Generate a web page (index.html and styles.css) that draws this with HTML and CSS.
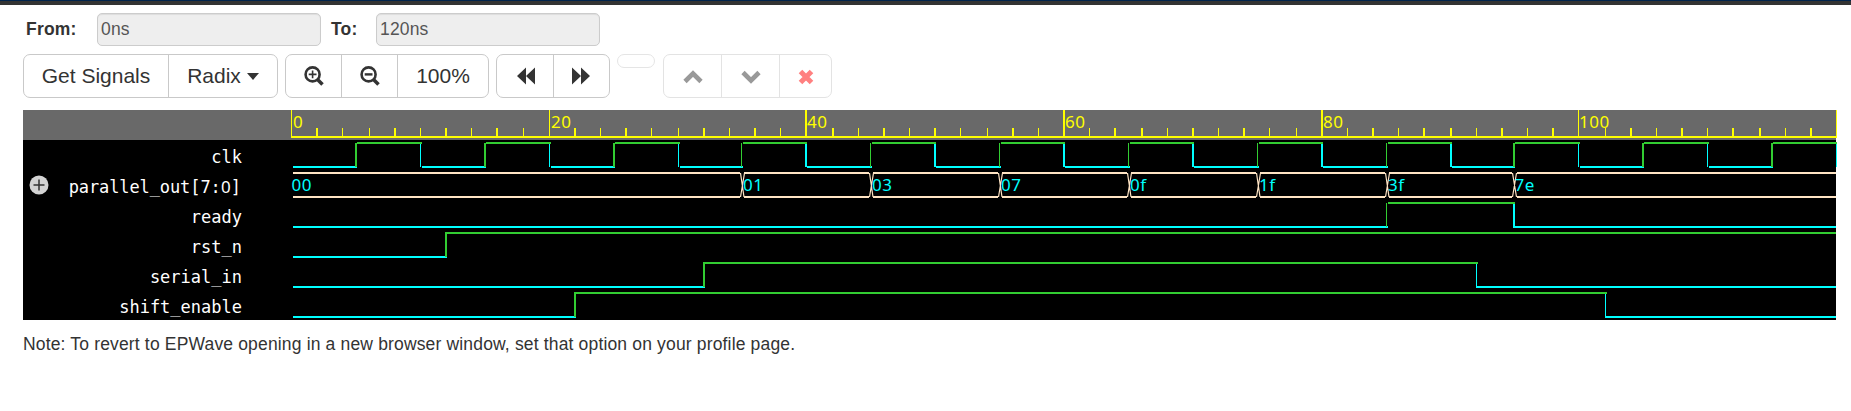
FILE: index.html
```html
<!DOCTYPE html>
<html lang="en">
<head>
<meta charset="utf-8">
<title>EPWave</title>
<link rel="stylesheet" href="styles.css">
</head>
<body>
<div class="topbar"></div>
<main class="page">
  <form class="range">
    <label class="from" for="from">From:</label><input id="from" class="field" value="0ns" readonly>
    <label class="to" for="to">To:</label><input id="to" class="field" value="120ns" readonly>
  </form>
  <div class="toolbar">
    <div class="group">
      <button class="btn signals">Get Signals</button>
      <button class="btn radix">Radix<span class="caret"></span></button>
    </div>
    <div class="group">
      <button class="btn zoom" aria-label="Zoom in"><svg width="20" height="20" viewBox="0 0 20 20"><circle cx="8.6" cy="8.4" r="7" class="lens"/><path class="handle" d="M13.5 13.5 18.5 18.5"/><path class="sign" d="M4.7 8.4h7.8M8.6 4.5v7.8"/></svg></button>
      <button class="btn zoom" aria-label="Zoom out"><svg width="20" height="20" viewBox="0 0 20 20"><circle cx="8.6" cy="8.4" r="7" class="lens"/><path class="handle" d="M13.5 13.5 18.5 18.5"/><path class="minus" d="M4.7 8.4h7.8"/></svg></button>
      <button class="btn full">100%</button>
    </div>
    <div class="group">
      <button class="btn seek" aria-label="Back"><svg width="18" height="18" viewBox="0 0 18 18"><path d="M0 9 9 .5V9L18 .5v17L9 9v8.500z"/></svg></button>
      <button class="btn seek" aria-label="Forward"><svg width="18" height="18" viewBox="0 0 18 18"><path d="M18 9 9 .5V9L0 .5v17L9 9v8.500z"/></svg></button>
    </div>
    <div class="group empty"></div>
    <div class="group faded">
      <button class="btn move" aria-label="Up"><svg width="20" height="14" viewBox="0 0 20 14"><path class="chevron" d="M2 11.500 10 3.500 18 11.500"/></svg></button>
      <button class="btn move" aria-label="Down"><svg width="20" height="14" viewBox="0 0 20 14"><path class="chevron" d="M2 2.500 10 10.500 18 2.500"/></svg></button>
      <button class="btn remove" aria-label="Remove"><svg width="16" height="16" viewBox="0 0 16 16"><path class="cross" d="M2.500 2.500 13.500 13.500M13.500 2.500 2.500 13.500"/></svg></button>
    </div>
  </div>
  <section class="viewer">
    <ul class="names">
      <li>clk</li>
      <li><svg class="expand" width="20" height="20" viewBox="0 0 20 20"><circle cx="10" cy="10" r="9.500"/><path d="M4.500 10h11M10 4.500v11"/></svg><span>parallel_out[7:<span class="zero">0</span>]</span></li>
      <li>ready</li>
      <li>rst_n</li>
      <li>serial_in</li>
      <li>shift_enable</li>
    </ul>
    <svg class="waves" width="1546" height="210" viewBox="291 110 1546 210">
      <rect class="ruler" x="291" y="110" width="1545" height="30"/>
      <g class="time">
        <path class="w2" d="M291 137H1837"/>
        <path class="w1" d="M291.500 110V137M549.500 110V137M1578.500 110V137M1836.500 110V137"/>
        <path class="w2" d="M806 110V137M1064 110V137M1322 110V137"/>
        <path class="w1" d="M342.500 128v8M369.500 128v8M420.500 128v8M471.500 128v8M523.500 128v8M600.500 128v8M651.500 128v8M678.500 128v8M729.500 128v8M780.500 128v8M858.500 128v8M909.500 128v8M960.500 128v8M987.500 128v8M1038.500 128v8M1089.500 128v8M1167.500 128v8M1218.500 128v8M1269.500 128v8M1296.500 128v8M1347.500 128v8M1398.500 128v8M1476.500 128v8M1527.500 128v8M1605.500 128v8M1656.500 128v8M1707.500 128v8M1785.500 128v8"/>
        <path class="w2" d="M317 128v8M395 128v8M446 128v8M497 128v8M575 128v8M626 128v8M704 128v8M755 128v8M833 128v8M884 128v8M935 128v8M1013 128v8M1115 128v8M1142 128v8M1193 128v8M1244 128v8M1373 128v8M1424 128v8M1451 128v8M1502 128v8M1553 128v8M1631 128v8M1682 128v8M1733 128v8M1760 128v8M1811 128v8"/>
      </g>
      <g class="digits tick">
        <text x="293" y="128">0</text><text x="551" y="128">20</text><text x="807" y="128">40</text><text x="1065" y="128">60</text><text x="1323" y="128">80</text><text x="1579" y="128">100</text>
      </g>
      <g class="low">
        <path class="w2" d="M293 167H357M422 167H486M551 167H615M680 167H743M807 167H872M936 167H1001M1065 167H1130M1194 167H1259M1323 167H1388M1452 167H1515M1580 167H1644M1709 167H1773"/>
        <path class="w1" d="M420.500 143v24M549.500 143v24M678.500 143v24M1578.500 143v24M1707.500 143v24M1836.500 143v24"/>
        <path class="w2" d="M806 143v24M935 143v24M1064 143v24M1193 143v24M1322 143v24M1451 143v24"/>
        <path class="w2" d="M293 227H1388M1514 203V227H1836M293 257H447M293 287H705M1476 287H1836M293 317H576M1605 317H1836"/>
        <path class="w1" d="M1476.500 263v24M1605.500 293v24"/>
      </g>
      <g class="high">
        <path class="w2" d="M357 143H422M486 143H551M615 143H680M743 143H807M872 143H936M1001 143H1065M1130 143H1194M1259 143H1323M1388 143H1452M1515 143H1580M1644 143H1709M1773 143H1837"/>
        <path class="w2" d="M356 143v24M485 143v24M614 143v24M1514 143v24M1643 143v24M1772 143v24"/>
        <path class="w1" d="M741.500 143v24M870.500 143v24M999.500 143v24M1128.500 143v24M1257.500 143v24M1386.500 143v24M1386.500 203v24"/>
        <path class="w2" d="M1388 203H1515M446 257V233H1836M704 287V263H1478M575 317V293H1607"/>
      </g>
      <g class="bus">
        <path class="w2" d="M293 173H740M744 173H869M873 173H998M1002 173H1127M1131 173H1256M1260 173H1385M1389 173H1512M1517 173H1836M293 197H740M744 197H869M873 197H998M1002 197H1127M1131 197H1256M1260 197H1385M1389 197H1512M1517 197H1836"/>
        <path class="cut" d="M740.500 173 744 197M744.500 173 740.500 197M869.500 173 873 197M873.500 173 869.500 197M998.500 173 1002 197M1002.500 173 998.500 197M1127.500 173 1131 197M1131.500 173 1127.500 197M1256.500 173 1260 197M1260.500 173 1256.500 197M1385.500 173 1389 197M1389.500 173 1385.500 197M1512.500 173 1516.500 197M1516.500 173 1512.500 197"/>
      </g>
      <g class="digits value">
        <text x="291.500" y="191">00</text><text x="743" y="191">01</text><text x="872" y="191">03</text><text x="1001" y="191">07</text><text x="1130" y="191">0f</text><text x="1259" y="191">1f</text><text x="1388" y="191">3f</text><text x="1514.500" y="191">7e</text>
      </g>
    </svg>
  </section>
  <p class="note">Note: To revert to EPWave opening in a new browser window, set that option on your profile page.</p>
</main>
</body>
</html>
```
FILE: styles.css
```css
* { box-sizing: border-box; }
body { margin: 0; background: #fff; color: #333; font: 17.5px/25px "Liberation Sans", Arial, sans-serif; overflow: hidden; }
.topbar { height: 5px; background: #333; border-top: 1px solid #00234b; }
.page { padding: 8px 0 0 23px; }
.range { display: flex; height: 33px; line-height: 32px; font-weight: bold; letter-spacing: .2px; }
.from { width: 74px; padding-left: 3px; }
.to { width: 55px; padding-left: 10px; }
.field { width: 224px; height: 33px; padding: 0 3px 1px; border: 1px solid #ccc; border-radius: 5px; background: #eee; color: #555; font: inherit; font-weight: normal; letter-spacing: .15px; box-shadow: inset 0 1px 1px rgba(0,0,0,.075); outline: 0; }
.toolbar { display: flex; gap: 7px; align-items: flex-start; margin-top: 8px; height: 44px; }
.group { display: flex; height: 44px; border: 1px solid #c9c9c9; border-radius: 7px; }
.btn { display: flex; align-items: center; justify-content: center; padding: 0; border: 0; border-left: 1px solid #c9c9c9; background: none; color: #333; font: 21px/42px "Liberation Sans", Arial, sans-serif; height: 42px; }
.btn:first-child { border-left: 0; }
.signals { width: 144px; }
.radix { width: 109px; }
.caret { margin-left: 6px; border: 6px solid transparent; border-top: 7px solid #333; border-bottom: 0; }
.zoom { width: 55px; }
.zoom + .zoom { width: 56px; }
.full { width: 91px; }
.seek { width: 56px; fill: #333; }
.seek:first-child { padding-left: 3px; }
.seek svg { margin-right: 2px; }
.lens { fill: none; stroke: #333; stroke-width: 2.6; }
.handle { stroke: #333; stroke-width: 3.6; }
.sign { fill: none; stroke: #333; stroke-width: 1.6; }
.minus { stroke: #333; stroke-width: 2.4; }
.empty { width: 38px; height: 14px; border-color: #e5e5e5; }
.faded { border-color: #e3e3e3; margin-left: 1px; }
.faded .btn { border-color: #e3e3e3; }
.faded svg { margin-top: 2px; }
.move { width: 57px; }
.move + .move { width: 58px; }
.remove { width: 52px; }
.chevron { fill: none; stroke: #999; stroke-width: 4.6; }
.cross { stroke: #ff8080; stroke-width: 5; }
.viewer { display: flex; width: 1814px; height: 210px; margin-top: 12px; background: linear-gradient(90deg, #000 1813px, #fff 1813px); }
.names { width: 268px; margin: 0; padding: 0; border-top: 30px solid #696969; list-style: none; color: #fff; font: 17px/30px "DejaVu Sans Mono", monospace; }
.names li { display: flex; justify-content: flex-end; align-items: center; height: 30px; padding: 4px 49px 0 6px; line-height: 26px; }
.expand { margin: -4px auto 0 0; fill: #d3d3d3; stroke: #333; stroke-width: 1.5; }
.expand + span { margin-right: 1px; letter-spacing: -.1px; }
.expand circle { stroke: none; }
.zero { display: inline-block; width: 10.200px; text-align: center; font-family: "Noto Sans", sans-serif; line-height: 1; }
.waves { display: block; flex: none; }
.ruler { fill: #696969; }
.w1, .w2 { fill: none; stroke-width: 1; }
.w2 { stroke-width: 2; }
.time { stroke: #ff0; }
.low { stroke: #0ff; }
.high { stroke: #32cd32; }
.bus { stroke: #ffe4c4; }
.cut { fill: none; stroke-width: 1.2; }
.digits { font: 17px "Noto Sans", sans-serif; letter-spacing: .5px; }
.tick { fill: #ff0; }
.value { fill: #0ff; }
.note { margin: 12px 0 0; letter-spacing: .16px; }
```
